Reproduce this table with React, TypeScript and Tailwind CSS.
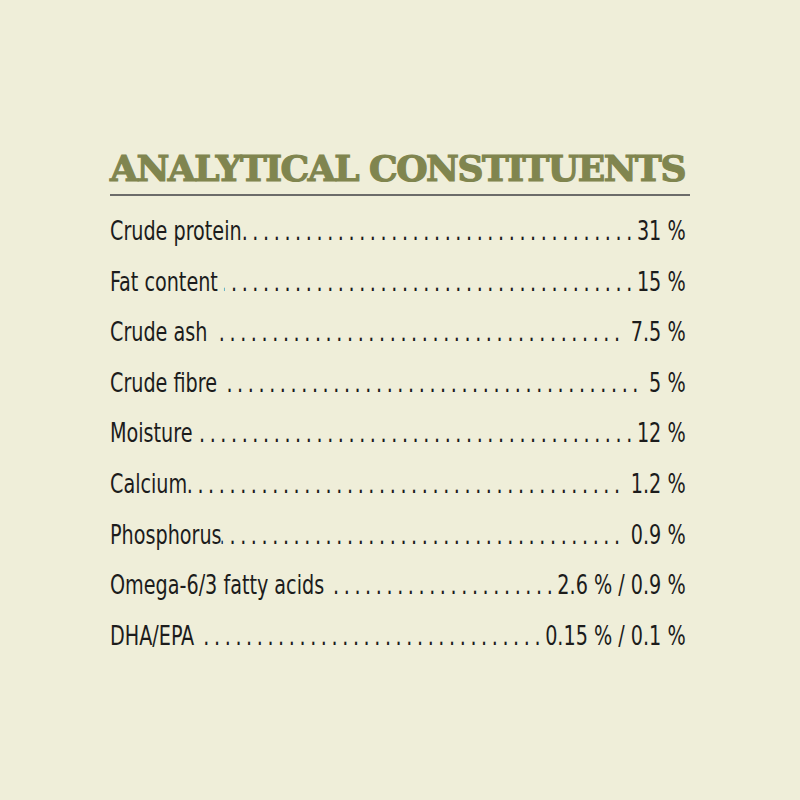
const rows: [string, string][] = [
  ["Crude protein", "31 %"],
  ["Fat content ", "15 %"],
  ["Crude ash ", " 7.5 %"],
  ["Crude fibre ", " 5 %"],
  ["Moisture ", "12 %"],
  ["Calcium", " 1.2 %"],
  ["Phosphorus", " 0.9 %"],
  ["Omega-6/3 fatty acids ", "2.6 % / 0.9 %"],
  ["DHA/EPA ", "0.15 % / 0.1 %"],
];

const dots = ".".repeat(100);

export default function App() {
  return (
    <div className="flex h-[800px] w-[800px] flex-col overflow-hidden bg-[#efeed9] pl-[110px] pt-[148px]">
      <div className="w-[580px]">
        <h1
          className="whitespace-nowrap text-[36px] font-bold leading-[40px] tracking-[-1.5px] text-[#80854f] [-webkit-text-stroke:1.2px_#80854f]"
          style={{ fontFamily: '"DejaVu Serif", serif' }}
        >
          ANALYTICAL CONSTITUENTS
        </h1>
        <div className="mt-[6px] h-[2px] w-full bg-[#6c6c6a]" />
        {/* condensed face: the list is laid out wide and squeezed horizontally */}
        <div
          className="mt-[20px] flex w-[702px] origin-left scale-x-[0.82] flex-col text-[26px] leading-[30px] text-[#1c1c1c]"
          style={{ fontFamily: '"DejaVu Sans Condensed", "DejaVu Sans", sans-serif' }}
        >
          {rows.map(([label, value]) => (
            <div key={label} className="flex h-[50.6px] items-start whitespace-nowrap">
              <span className="shrink-0 whitespace-pre">{label}</span>
              <span className="flex min-w-0 flex-1 justify-end overflow-hidden">
                <span className="shrink-0 tracking-[5.6px]">{dots}</span>
              </span>
              <span className="shrink-0 whitespace-pre">{value}</span>
            </div>
          ))}
        </div>
      </div>
    </div>
  );
}
